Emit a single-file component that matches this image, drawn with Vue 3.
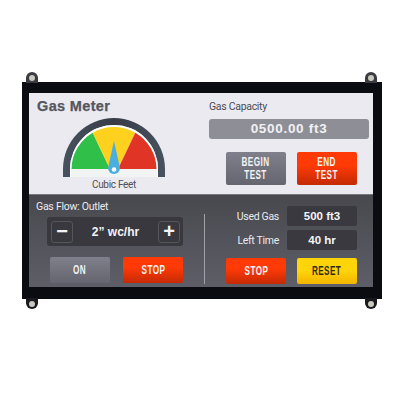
<script setup>
const ears = [
  { id: 'tl', cls: 'ear top left' },
  { id: 'tr', cls: 'ear top right' },
  { id: 'bl', cls: 'ear bottom left' },
  { id: 'br', cls: 'ear bottom right' }
]
</script>

<template>
  <div class="page">
    <div class="device">
      <span v-for="e in ears" :key="e.id" :class="e.cls"><i></i></span>
      <div class="screen">
        <section class="light">
          <div class="gauge-col">
            <h1>Gas Meter</h1>
            <svg class="gauge" width="104" height="60" viewBox="0 0 104 60">
              <defs>
                <linearGradient id="rim" x1="0" y1="0" x2="1" y2="0">
                  <stop offset="0" stop-color="#46525f" />
                  <stop offset="0.5" stop-color="#383c46" />
                  <stop offset="1" stop-color="#46525f" />
                </linearGradient>
              </defs>
              <path d="M1 59 L1 51 A51 51 0 0 1 103 51 L103 59 L96 59 L96 51 A44 44 0 0 0 8 51 L8 59 Z" fill="url(#rim)" />
              <path d="M8 59 L8 51 A44 44 0 0 1 96 51 L96 59 Z" fill="#fff" />
              <rect x="9" y="51" width="86" height="8" fill="#f2f3f3" />
              <path d="M9.5 51 L48 51 L30.7 14.7 A42.5 42.5 0 0 0 9.5 51 Z" fill="#30bf48" />
              <path d="M30.7 14.7 A42.5 42.5 0 0 1 73.3 14.7 L56 51 L48 51 Z" fill="#fdd11d" />
              <path d="M73.3 14.7 A42.5 42.5 0 0 1 94.5 51 L56 51 Z" fill="#e03426" />
              <path d="M52 23 L58 50 A6 6 0 1 1 46 50 Z" fill="#4aaee0" />
              <circle cx="52" cy="51.5" r="2.3" fill="#fff" />
            </svg>
            <div class="unit">Cubic Feet</div>
          </div>
          <div class="capacity-col">
            <div class="cap-label">Gas Capacity</div>
            <div class="readout">0500.00 ft3</div>
            <div class="btn-row">
              <button class="btn grey tall"><span>BEGIN<br />TEST</span></button>
              <button class="btn red tall"><span>END<br />TEST</span></button>
            </div>
          </div>
        </section>
        <section class="dark">
          <div class="flow-col">
            <div class="flow-label">Gas Flow: Outlet</div>
            <div class="stepper">
              <span class="step">−</span>
              <span class="step-val">2” wc/hr</span>
              <span class="step">+</span>
            </div>
            <div class="btn-row flow-btns">
              <button class="btn grey"><span>ON</span></button>
              <button class="btn red"><span>STOP</span></button>
            </div>
          </div>
          <div class="divider"></div>
          <div class="stats-col">
            <div class="stat">
              <span class="stat-label">Used Gas</span>
              <span class="stat-val">500 ft3</span>
            </div>
            <div class="stat">
              <span class="stat-label">Left Time</span>
              <span class="stat-val">40 hr</span>
            </div>
            <div class="btn-row stat-btns">
              <button class="btn red"><span>STOP</span></button>
              <button class="btn yellow"><span>RESET</span></button>
            </div>
          </div>
        </section>
      </div>
    </div>
  </div>
</template>

<style scoped>
.page {
  width: 400px;
  height: 400px;
  background: #fff;
  padding: 82px 18px 0 22px;
  box-sizing: border-box;
  font-family: "Liberation Sans", Arial, sans-serif;
}
.device {
  position: relative;
  width: 360px;
  height: 217px;
  box-sizing: border-box;
  padding: 11px 9px 12px 7px;
  background: #0b0b12;
}
.ear {
  position: absolute;
  width: 12px;
  height: 11px;
  display: flex;
  align-items: center;
  justify-content: center;
}
.ear i {
  width: 6px;
  height: 6px;
  border-radius: 50%;
  background: #c9c9c0;
}
.ear.top {
  top: -10px;
  background: #3a3a40;
  border-radius: 6px 6px 0 0;
}
.ear.bottom {
  bottom: -10px;
  background: #1a1a1e;
  border-radius: 0 0 6px 6px;
}
.ear.left { left: 4px; }
.ear.right { right: 5px; }
.screen {
  height: 194px;
  display: flex;
  flex-direction: column;
}
.light {
  height: 102px;
  flex: none;
  background: #eaeaf0;
  display: flex;
  box-sizing: border-box;
  border-bottom: 1px solid #77777c;
}
.gauge-col {
  width: 180px;
  box-sizing: border-box;
  padding: 4px 0 0 8px;
}
h1 {
  margin: 0;
  font-size: 14.5px;
  line-height: 18px;
  font-weight: 700;
  letter-spacing: 0.35px;
  color: #55555e;
  -webkit-text-stroke: 0.25px #55555e;
}
.gauge {
  display: block;
  margin: 3px 0 0 25px;
}
.unit {
  margin: 0 0 0 25px;
  width: 104px;
  text-align: center;
  font-family: Roboto, sans-serif;
  font-size: 10px;
  letter-spacing: -0.3px;
  line-height: 13px;
  color: #4f4f55;
}
.capacity-col {
  flex: 1;
  box-sizing: border-box;
  padding: 8px 4px 0 0;
}
.cap-label {
  font-family: Roboto, sans-serif;
  font-size: 10.5px;
  letter-spacing: -0.3px;
  line-height: 12px;
  color: #4c4c52;
}
.readout {
  margin-top: 6px;
  height: 20px;
  line-height: 20px;
  border-radius: 3px;
  background: #8e8e96;
  color: #f1f1f3;
  font-size: 13.5px;
  font-weight: 700;
  letter-spacing: 0.7px;
  text-align: center;
}
.btn-row {
  display: flex;
  gap: 11px;
}
.capacity-col .btn-row {
  margin: 13px 0 0 17px;
}
.btn {
  width: 60px;
  height: 26px;
  padding: 0;
  border: 0;
  border-radius: 2px;
  font-family: "Liberation Sans", sans-serif;
  font-weight: 700;
  font-size: 12px;
  letter-spacing: 0.6px;
  color: #f2f2f4;
}
.btn span {
  display: inline-block;
  transform: scaleX(0.68);
}
.btn.tall {
  height: 33px;
  line-height: 12.5px;
}
.grey {
  background: linear-gradient(#80808c, #65656f);
}
.red {
  background: linear-gradient(#ff3a06 40%, #c42a04);
}
.yellow {
  background: linear-gradient(#ffd408 50%, #f2b400);
  color: #2e2a18;
}
.dark {
  flex: 1;
  background: linear-gradient(#48484e, #5e5e68);
  display: flex;
}
.flow-col {
  width: 175px;
  box-sizing: border-box;
  padding: 6px 0 0 7px;
}
.flow-label {
  font-family: Roboto, sans-serif;
  font-size: 10.5px;
  letter-spacing: -0.25px;
  line-height: 12px;
  color: #ebebee;
}
.stepper {
  margin: 4px 0 0 11px;
  width: 136px;
  height: 29px;
  box-sizing: border-box;
  padding: 0 3px 0 4px;
  border-radius: 3px;
  background: #38383e;
  display: flex;
  align-items: center;
  justify-content: space-between;
  color: #f4f4f6;
}
.step {
  width: 22px;
  height: 22px;
  box-sizing: border-box;
  border: 1px solid #55555c;
  border-radius: 3px;
  font-size: 20px;
  font-weight: 700;
  line-height: 19px;
  text-align: center;
}
.step-val {
  font-size: 12px;
  font-weight: 700;
}
.flow-btns {
  margin: 11px 0 0 14px;
  gap: 13px;
}
.divider {
  width: 1px;
  height: 70px;
  margin: 19px 0 0 0;
  background: #a0a0a6;
}
.stats-col {
  flex: 1;
  box-sizing: border-box;
  padding: 11px 0 0 21px;
}
.stat {
  display: flex;
  align-items: center;
  justify-content: flex-end;
  gap: 8px;
  height: 20px;
  margin: 0 16px 4px 0;
}
.stat-label {
  font-family: Roboto, sans-serif;
  font-size: 10.5px;
  letter-spacing: -0.3px;
  color: #ebebee;
}
.stat-val {
  width: 70px;
  height: 20px;
  line-height: 20px;
  border-radius: 2px;
  background: #39393f;
  color: #f4f4f6;
  font-size: 11.5px;
  font-weight: 700;
  text-align: center;
}
.stat-btns {
  margin-top: 8px;
}
</style>
